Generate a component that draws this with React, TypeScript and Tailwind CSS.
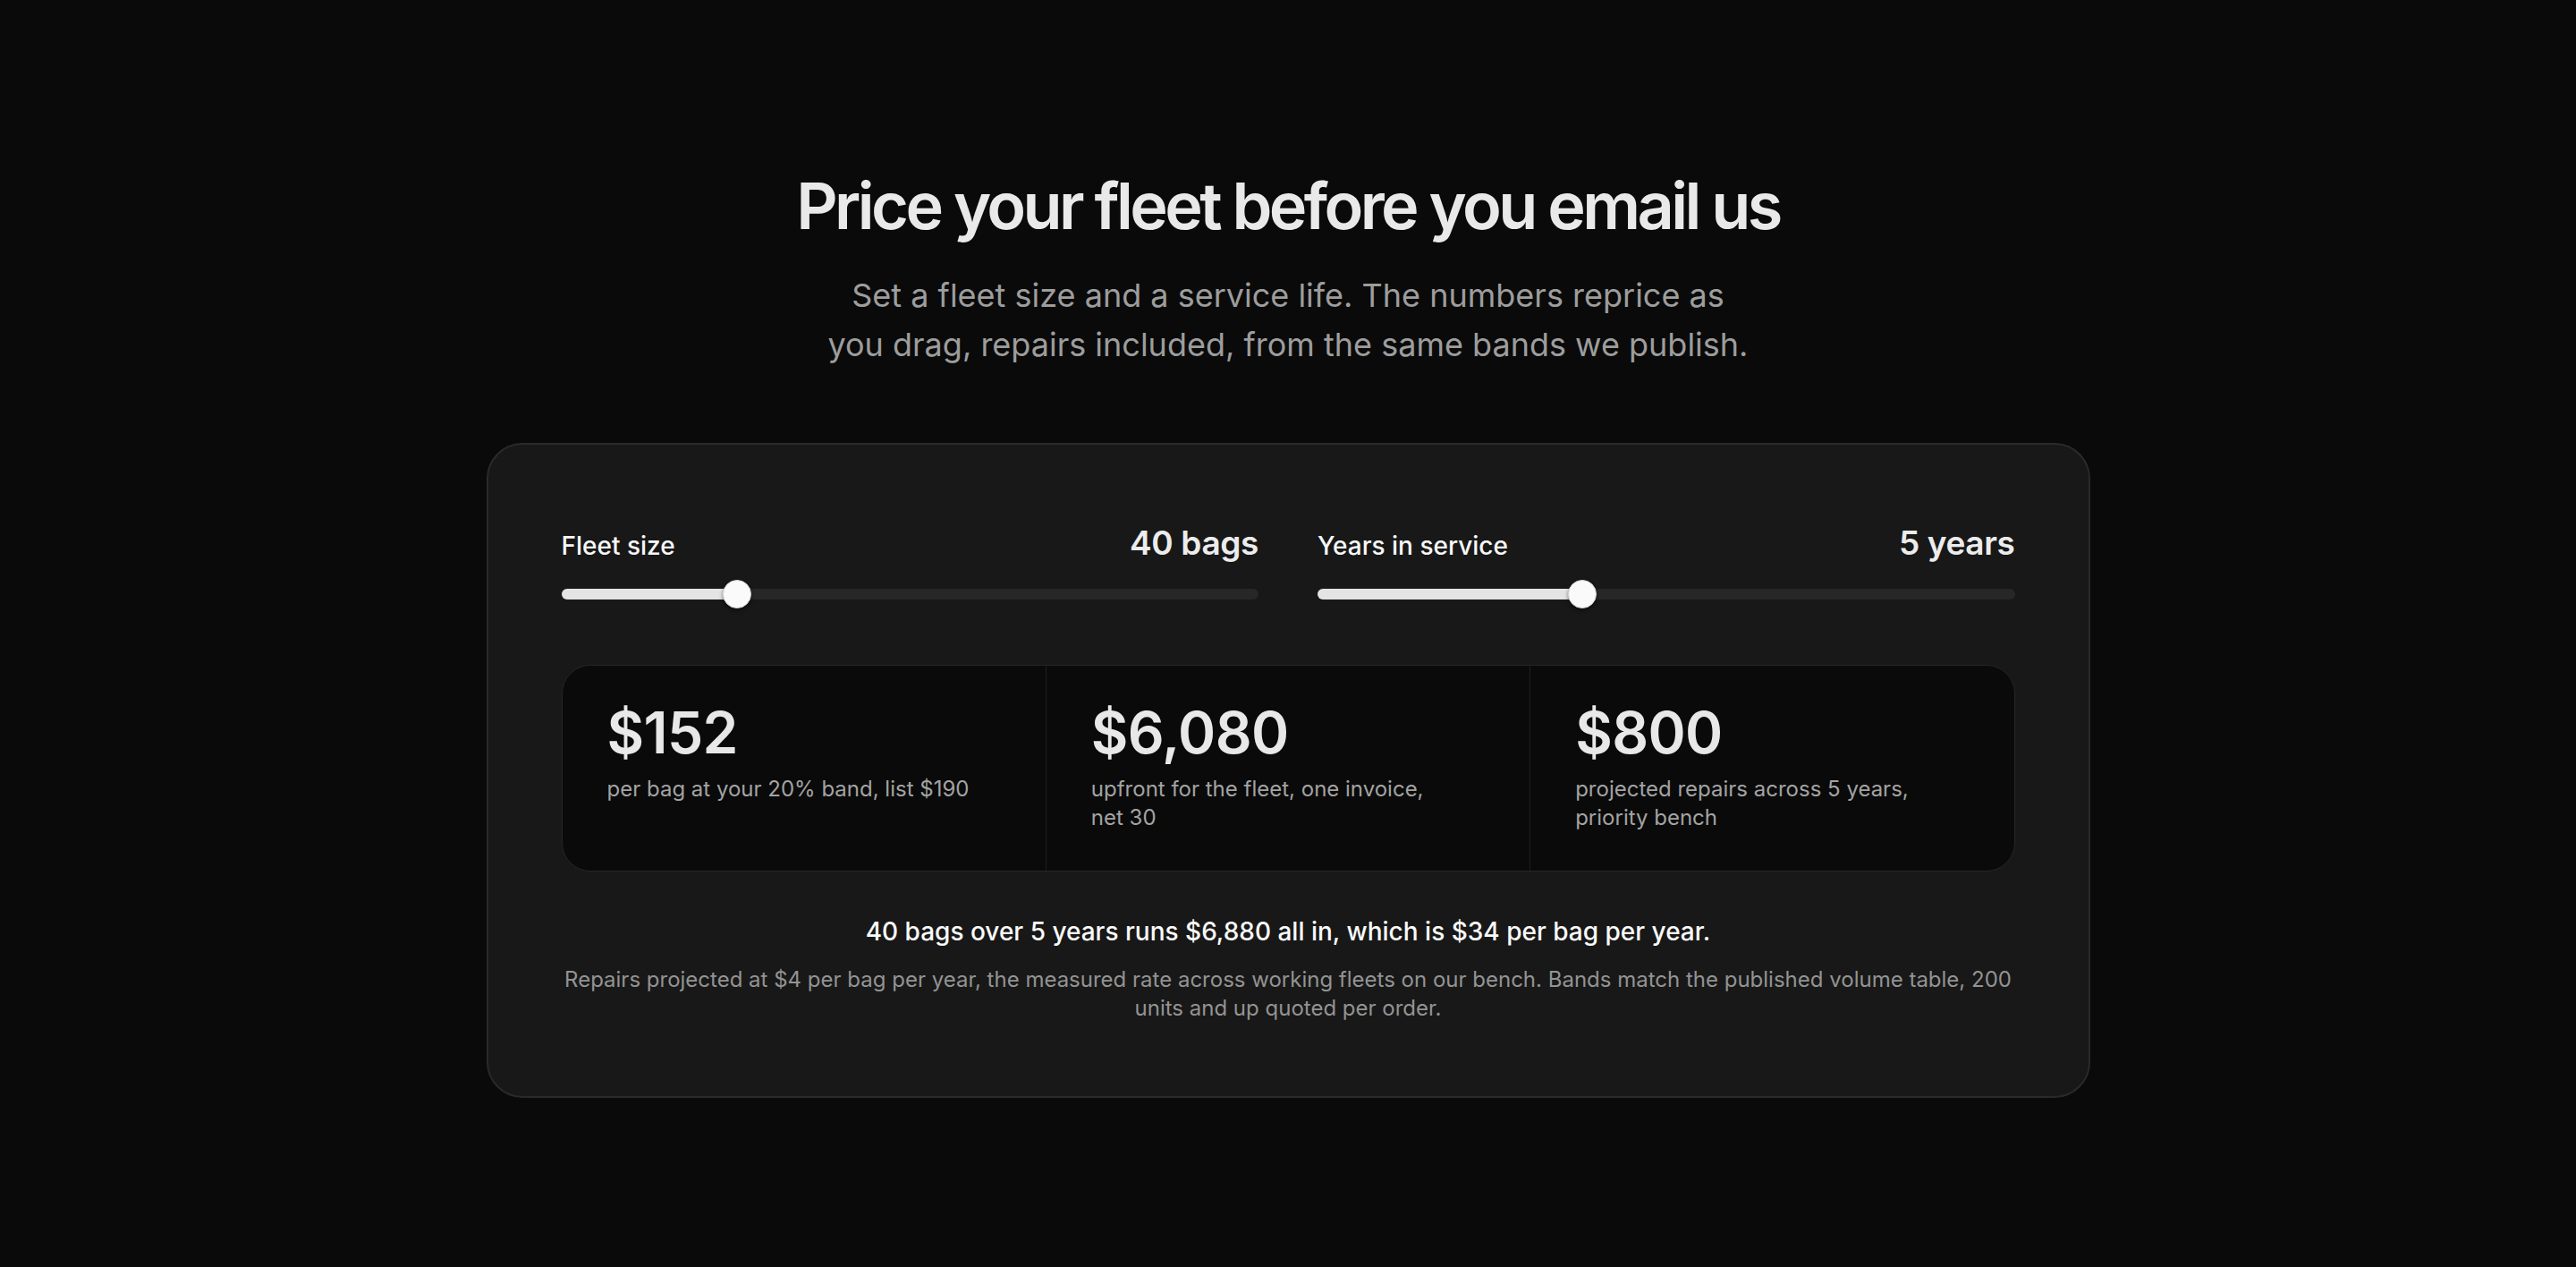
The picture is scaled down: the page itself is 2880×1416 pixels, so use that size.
import { useState } from 'react';

const LIST_PRICE = 190;
const REPAIR_RATE = 4;

function bandFor(bags: number) {
    if (bags >= 100) return 0.25;
    if (bags >= 25) return 0.2;
    if (bags >= 10) return 0.1;
    return 0;
}

interface RangeRowProps {
    label: string;
    display: string;
    value: number;
    min: number;
    max: number;
    onChange: (v: number) => void;
}

function RangeRow({ label, display, value, min, max, onChange }: RangeRowProps) {
    const f = (value - min) / (max - min);
    const pos = `calc(${f} * (100% - 32px) + 16px)`;

    return (
        <div className="flex flex-col">
            <div className="h-[50px] flex items-baseline justify-between">
                <span className="text-[28px] font-medium text-[#f7f7f7]">{label}</span>
                <span className="text-[37px] font-semibold text-[#ececec] tracking-[-0.01em]">{display}</span>
            </div>
            <div className="relative h-8 mt-[19px]">
                <div className="absolute left-0 right-0 top-[10px] h-3 rounded-full bg-[#272727]" />
                <div className="absolute left-0 top-[10px] h-3 rounded-full bg-[#e4e4e4]" style={{ width: pos }} />
                <div
                    className="absolute top-0 w-8 h-8 -ml-4 rounded-full bg-[#fafafa] border border-[#d4d4d4] shadow-[0_2px_4px_rgba(0,0,0,0.45)]"
                    style={{ left: pos }}
                />
                <input
                    type="range"
                    min={min}
                    max={max}
                    value={value}
                    onChange={(e) => onChange(Number(e.target.value))}
                    className="absolute inset-0 w-full h-full opacity-0 cursor-pointer"
                />
            </div>
        </div>
    );
}

function Stat({ amount, note, first }: { amount: string; note: string; first?: boolean }) {
    return (
        <div className={`flex-1 flex flex-col px-[50px] py-[43px] ${first ? '' : 'border-l border-[#1f1f1f]'}`}>
            <span className="text-[64px] leading-none font-semibold text-[#e8e8e8] tracking-[-0.01em]">{amount}</span>
            <span className="mt-[15px] text-[24px] leading-8 text-[#a3a3a3] max-w-[410px]">{note}</span>
        </div>
    );
}

const usd = (n: number) => '$' + Math.round(n).toLocaleString('en-US');

export default function App() {
    const [bags, setBags] = useState(40);
    const [years, setYears] = useState(5);

    const band = bandFor(bags);
    const perBag = LIST_PRICE * (1 - band);
    const upfront = perBag * bags;
    const repairs = REPAIR_RATE * bags * years;
    const total = upfront + repairs;
    const perBagYear = Math.floor(total / (bags * years));

    return (
        <div className="min-h-screen bg-[#0a0a0a] font-['Inter',sans-serif] flex flex-col items-center pt-[190px] pb-[190px]">
            <h1 className="text-[72px] leading-[1.1] font-semibold tracking-[-0.05em] text-[#e9e9e9]">
                Price your fleet before you email us
            </h1>
            <p className="mt-[34px] max-w-[1036px] text-center text-[36px] leading-[55px] text-[#9d9d9d]">
                Set a fleet size and a service life. The numbers reprice as you drag, repairs included, from the same bands we publish.
            </p>

            <div className="mt-[82px] w-[1793px] rounded-[40px] border-2 border-[#2a2a2a] bg-[#181818] p-[82px] flex flex-col">
                <div className="grid grid-cols-2 gap-[66px]">
                    <RangeRow label="Fleet size" display={`${bags} bags`} value={bags} min={5} max={150} onChange={setBags} />
                    <RangeRow label="Years in service" display={`${years} years`} value={years} min={2} max={10} onChange={setYears} />
                </div>

                <div className="mt-[63px] flex rounded-[32px] border border-[#262626] bg-[#0a0a0a]">
                    <Stat first amount={usd(perBag)} note={`per bag at your ${Math.round(band * 100)}% band, list ${usd(LIST_PRICE)}`} />
                    <Stat amount={usd(upfront)} note="upfront for the fleet, one invoice, net 30" />
                    <Stat amount={usd(repairs)} note={`projected repairs across ${years} years, priority bench`} />
                </div>

                <p className="mt-[47px] text-center text-[28px] leading-10 font-medium text-[#fafafa]">
                    {bags} bags over {years} years runs {usd(total)} all in, which is {usd(perBagYear)} per bag per year.
                </p>
                <p className="mt-[18px] text-center text-[24px] leading-8 text-[#939393]">
                    Repairs projected at {usd(REPAIR_RATE)} per bag per year, the measured rate across working fleets on our bench. Bands match the published volume table, 200 units and up quoted per order.
                </p>
            </div>
        </div>
    );
}
